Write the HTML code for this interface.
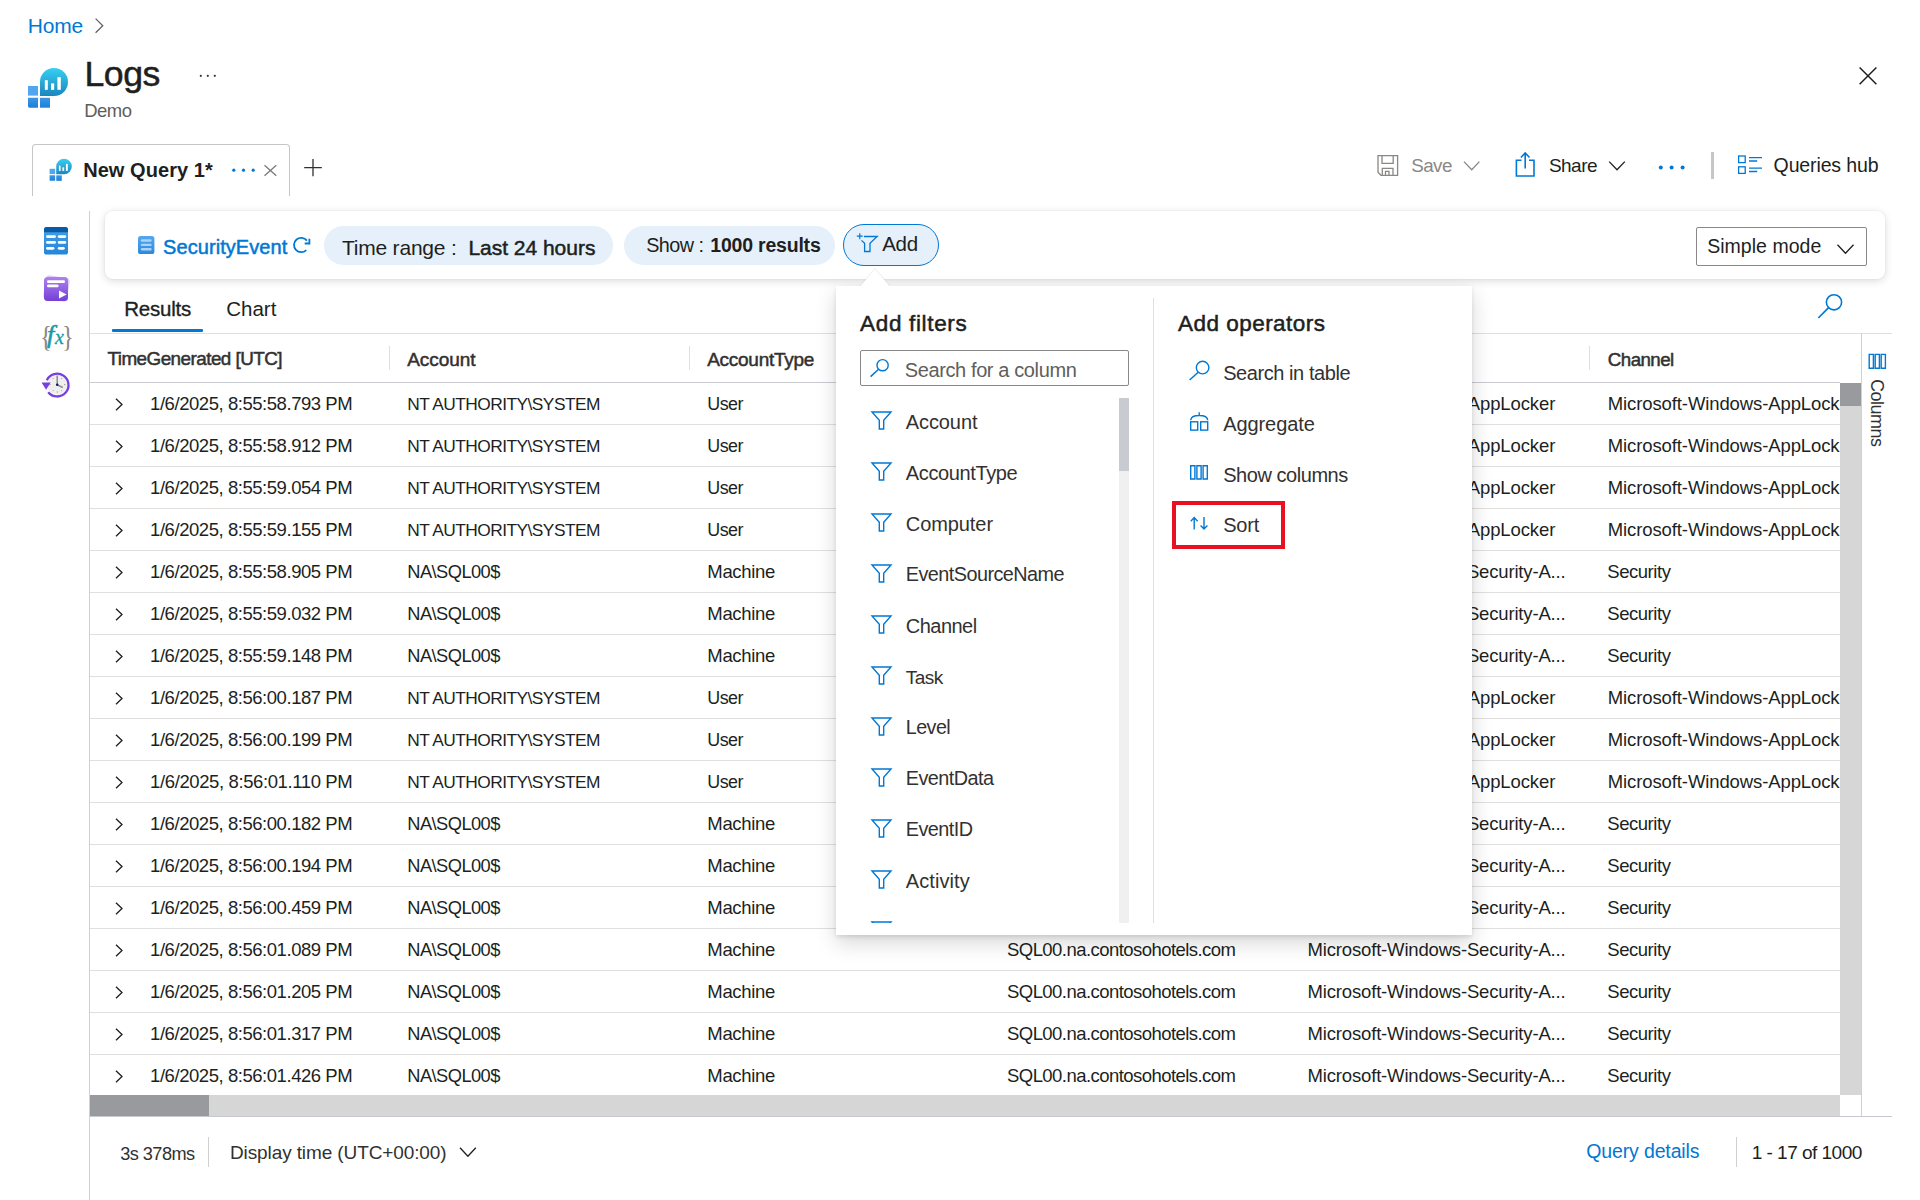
<!DOCTYPE html>
<html><head><meta charset="utf-8">
<style>
*{box-sizing:border-box;margin:0;padding:0}
html,body{width:1920px;height:1200px;overflow:hidden;background:#fff;font-family:"Liberation Sans",sans-serif;color:#201f1e}
.t{position:absolute;white-space:pre;line-height:1}
.b{position:absolute}
svg{position:absolute;overflow:visible}
</style></head><body>
<!-- lines and boxes -->
<div class="b" style="left:32px;top:144px;width:258px;height:52px;border:1px solid #c8c6c4;border-bottom:none;border-radius:4px 4px 0 0"></div>
<div class="b" style="left:1711px;top:152px;width:2.5px;height:27px;background:#c8c6c4"></div>
<div class="b" style="left:89px;top:211px;width:1px;height:989px;background:#d2d0ce"></div>
<div class="b" style="left:105px;top:211px;width:1780px;height:68px;background:#fff;border-radius:8px;box-shadow:0 2px 8px rgba(0,0,0,.14),0 0 2px rgba(0,0,0,.08)"></div>
<div class="b" style="left:324px;top:226px;width:289px;height:39px;border-radius:20px;background:#e6f0fa"></div>
<div class="b" style="left:624px;top:226px;width:211px;height:39px;border-radius:20px;background:#e6f0fa"></div>
<div class="b" style="left:843px;top:224px;width:96px;height:42px;border-radius:21px;border:1.3px solid #0078d4;background:#e6f0fa"></div>
<div class="b" style="left:1696px;top:227px;width:171px;height:39px;border:1px solid #8a8886;border-radius:2px"></div>
<div class="b" style="left:112px;top:329px;width:91px;height:3px;background:#0078d4;border-radius:1px"></div>
<div class="b" style="left:90px;top:333px;width:1802px;height:1px;background:#e1dfdd"></div>
<!-- table -->
<div class="b" style="left:90px;top:382px;width:1750px;height:1px;background:#c8ccd0"></div>
<div class="b" style="left:389px;top:346px;width:1px;height:24px;background:#e1dfdd"></div>
<div class="b" style="left:689px;top:346px;width:1px;height:24px;background:#e1dfdd"></div>
<div class="b" style="left:989px;top:346px;width:1px;height:24px;background:#e1dfdd"></div>
<div class="b" style="left:1289px;top:346px;width:1px;height:24px;background:#e1dfdd"></div>
<div class="b" style="left:1589px;top:346px;width:1px;height:24px;background:#e1dfdd"></div>
<div class="b" style="left:90px;top:424px;width:1750px;height:1px;background:#e1dfdd"></div>
<div class="b" style="left:90px;top:466px;width:1750px;height:1px;background:#e1dfdd"></div>
<div class="b" style="left:90px;top:508px;width:1750px;height:1px;background:#e1dfdd"></div>
<div class="b" style="left:90px;top:550px;width:1750px;height:1px;background:#e1dfdd"></div>
<div class="b" style="left:90px;top:592px;width:1750px;height:1px;background:#e1dfdd"></div>
<div class="b" style="left:90px;top:634px;width:1750px;height:1px;background:#e1dfdd"></div>
<div class="b" style="left:90px;top:676px;width:1750px;height:1px;background:#e1dfdd"></div>
<div class="b" style="left:90px;top:718px;width:1750px;height:1px;background:#e1dfdd"></div>
<div class="b" style="left:90px;top:760px;width:1750px;height:1px;background:#e1dfdd"></div>
<div class="b" style="left:90px;top:802px;width:1750px;height:1px;background:#e1dfdd"></div>
<div class="b" style="left:90px;top:844px;width:1750px;height:1px;background:#e1dfdd"></div>
<div class="b" style="left:90px;top:886px;width:1750px;height:1px;background:#e1dfdd"></div>
<div class="b" style="left:90px;top:928px;width:1750px;height:1px;background:#e1dfdd"></div>
<div class="b" style="left:90px;top:970px;width:1750px;height:1px;background:#e1dfdd"></div>
<div class="b" style="left:90px;top:1012px;width:1750px;height:1px;background:#e1dfdd"></div>
<div class="b" style="left:90px;top:1054px;width:1750px;height:1px;background:#e1dfdd"></div>
<div class="b" style="left:90px;top:383px;width:1750px;height:712px;overflow:hidden">
<div class="b" style="left:-90px;top:-383px;width:1920px;height:1200px">
<div class="t" style="left:150.1px;top:395.1px;font-size:18.5px;color:#201f1e;letter-spacing:-0.45px">1/6/2025, 8:55:58.793 PM</div>
<div class="t" style="left:407.3px;top:396.1px;font-size:17.35px;color:#201f1e;letter-spacing:-0.55px">NT AUTHORITY\SYSTEM</div>
<div class="t" style="left:707.3px;top:395.6px;font-size:17.91px;color:#201f1e;letter-spacing:-0.55px">User</div>
<div class="t" style="left:1007.0px;top:395.1px;font-size:18.5px;color:#201f1e;letter-spacing:-0.55px">SQL00.na.contosohotels.com</div>
<div class="t" style="left:1307.3px;top:395.1px;font-size:18.5px;color:#201f1e;letter-spacing:-0.11px">Microsoft-Windows-AppLocker</div>
<div class="t" style="left:1607.8px;top:395.1px;font-size:18.5px;color:#201f1e;letter-spacing:-0.11px">Microsoft-Windows-AppLocker</div>
<div class="t" style="left:150.1px;top:437.1px;font-size:18.5px;color:#201f1e;letter-spacing:-0.45px">1/6/2025, 8:55:58.912 PM</div>
<div class="t" style="left:407.3px;top:438.1px;font-size:17.35px;color:#201f1e;letter-spacing:-0.55px">NT AUTHORITY\SYSTEM</div>
<div class="t" style="left:707.3px;top:437.6px;font-size:17.91px;color:#201f1e;letter-spacing:-0.55px">User</div>
<div class="t" style="left:1007.0px;top:437.1px;font-size:18.5px;color:#201f1e;letter-spacing:-0.55px">SQL00.na.contosohotels.com</div>
<div class="t" style="left:1307.3px;top:437.1px;font-size:18.5px;color:#201f1e;letter-spacing:-0.11px">Microsoft-Windows-AppLocker</div>
<div class="t" style="left:1607.8px;top:437.1px;font-size:18.5px;color:#201f1e;letter-spacing:-0.11px">Microsoft-Windows-AppLocker</div>
<div class="t" style="left:150.1px;top:479.1px;font-size:18.5px;color:#201f1e;letter-spacing:-0.45px">1/6/2025, 8:55:59.054 PM</div>
<div class="t" style="left:407.3px;top:480.1px;font-size:17.35px;color:#201f1e;letter-spacing:-0.55px">NT AUTHORITY\SYSTEM</div>
<div class="t" style="left:707.3px;top:479.6px;font-size:17.91px;color:#201f1e;letter-spacing:-0.55px">User</div>
<div class="t" style="left:1007.0px;top:479.1px;font-size:18.5px;color:#201f1e;letter-spacing:-0.55px">SQL00.na.contosohotels.com</div>
<div class="t" style="left:1307.3px;top:479.1px;font-size:18.5px;color:#201f1e;letter-spacing:-0.11px">Microsoft-Windows-AppLocker</div>
<div class="t" style="left:1607.8px;top:479.1px;font-size:18.5px;color:#201f1e;letter-spacing:-0.11px">Microsoft-Windows-AppLocker</div>
<div class="t" style="left:150.1px;top:521.1px;font-size:18.5px;color:#201f1e;letter-spacing:-0.45px">1/6/2025, 8:55:59.155 PM</div>
<div class="t" style="left:407.3px;top:522.1px;font-size:17.35px;color:#201f1e;letter-spacing:-0.55px">NT AUTHORITY\SYSTEM</div>
<div class="t" style="left:707.3px;top:521.6px;font-size:17.91px;color:#201f1e;letter-spacing:-0.55px">User</div>
<div class="t" style="left:1007.0px;top:521.1px;font-size:18.5px;color:#201f1e;letter-spacing:-0.55px">SQL00.na.contosohotels.com</div>
<div class="t" style="left:1307.3px;top:521.1px;font-size:18.5px;color:#201f1e;letter-spacing:-0.11px">Microsoft-Windows-AppLocker</div>
<div class="t" style="left:1607.8px;top:521.1px;font-size:18.5px;color:#201f1e;letter-spacing:-0.11px">Microsoft-Windows-AppLocker</div>
<div class="t" style="left:150.1px;top:563.1px;font-size:18.5px;color:#201f1e;letter-spacing:-0.45px">1/6/2025, 8:55:58.905 PM</div>
<div class="t" style="left:407.3px;top:563.3px;font-size:18.28px;color:#201f1e;letter-spacing:-0.55px">NA\SQL00$</div>
<div class="t" style="left:707.3px;top:563.1px;font-size:18.5px;color:#201f1e;letter-spacing:-0.33px">Machine</div>
<div class="t" style="left:1007.0px;top:563.1px;font-size:18.5px;color:#201f1e;letter-spacing:-0.55px">SQL00.na.contosohotels.com</div>
<div class="t" style="left:1307.6px;top:563.1px;font-size:18.5px;color:#201f1e;letter-spacing:-0.17px">Microsoft-Windows-Security-A...</div>
<div class="t" style="left:1607.3px;top:563.1px;font-size:18.5px;color:#201f1e;letter-spacing:-0.46px">Security</div>
<div class="t" style="left:150.1px;top:605.1px;font-size:18.5px;color:#201f1e;letter-spacing:-0.45px">1/6/2025, 8:55:59.032 PM</div>
<div class="t" style="left:407.3px;top:605.3px;font-size:18.28px;color:#201f1e;letter-spacing:-0.55px">NA\SQL00$</div>
<div class="t" style="left:707.3px;top:605.1px;font-size:18.5px;color:#201f1e;letter-spacing:-0.33px">Machine</div>
<div class="t" style="left:1007.0px;top:605.1px;font-size:18.5px;color:#201f1e;letter-spacing:-0.55px">SQL00.na.contosohotels.com</div>
<div class="t" style="left:1307.6px;top:605.1px;font-size:18.5px;color:#201f1e;letter-spacing:-0.17px">Microsoft-Windows-Security-A...</div>
<div class="t" style="left:1607.3px;top:605.1px;font-size:18.5px;color:#201f1e;letter-spacing:-0.46px">Security</div>
<div class="t" style="left:150.1px;top:647.1px;font-size:18.5px;color:#201f1e;letter-spacing:-0.45px">1/6/2025, 8:55:59.148 PM</div>
<div class="t" style="left:407.3px;top:647.3px;font-size:18.28px;color:#201f1e;letter-spacing:-0.55px">NA\SQL00$</div>
<div class="t" style="left:707.3px;top:647.1px;font-size:18.5px;color:#201f1e;letter-spacing:-0.33px">Machine</div>
<div class="t" style="left:1007.0px;top:647.1px;font-size:18.5px;color:#201f1e;letter-spacing:-0.55px">SQL00.na.contosohotels.com</div>
<div class="t" style="left:1307.6px;top:647.1px;font-size:18.5px;color:#201f1e;letter-spacing:-0.17px">Microsoft-Windows-Security-A...</div>
<div class="t" style="left:1607.3px;top:647.1px;font-size:18.5px;color:#201f1e;letter-spacing:-0.46px">Security</div>
<div class="t" style="left:150.1px;top:689.1px;font-size:18.5px;color:#201f1e;letter-spacing:-0.45px">1/6/2025, 8:56:00.187 PM</div>
<div class="t" style="left:407.3px;top:690.1px;font-size:17.35px;color:#201f1e;letter-spacing:-0.55px">NT AUTHORITY\SYSTEM</div>
<div class="t" style="left:707.3px;top:689.6px;font-size:17.91px;color:#201f1e;letter-spacing:-0.55px">User</div>
<div class="t" style="left:1007.0px;top:689.1px;font-size:18.5px;color:#201f1e;letter-spacing:-0.55px">SQL00.na.contosohotels.com</div>
<div class="t" style="left:1307.3px;top:689.1px;font-size:18.5px;color:#201f1e;letter-spacing:-0.11px">Microsoft-Windows-AppLocker</div>
<div class="t" style="left:1607.8px;top:689.1px;font-size:18.5px;color:#201f1e;letter-spacing:-0.11px">Microsoft-Windows-AppLocker</div>
<div class="t" style="left:150.1px;top:731.1px;font-size:18.5px;color:#201f1e;letter-spacing:-0.45px">1/6/2025, 8:56:00.199 PM</div>
<div class="t" style="left:407.3px;top:732.1px;font-size:17.35px;color:#201f1e;letter-spacing:-0.55px">NT AUTHORITY\SYSTEM</div>
<div class="t" style="left:707.3px;top:731.6px;font-size:17.91px;color:#201f1e;letter-spacing:-0.55px">User</div>
<div class="t" style="left:1007.0px;top:731.1px;font-size:18.5px;color:#201f1e;letter-spacing:-0.55px">SQL00.na.contosohotels.com</div>
<div class="t" style="left:1307.3px;top:731.1px;font-size:18.5px;color:#201f1e;letter-spacing:-0.11px">Microsoft-Windows-AppLocker</div>
<div class="t" style="left:1607.8px;top:731.1px;font-size:18.5px;color:#201f1e;letter-spacing:-0.11px">Microsoft-Windows-AppLocker</div>
<div class="t" style="left:150.1px;top:773.1px;font-size:18.5px;color:#201f1e;letter-spacing:-0.39px">1/6/2025, 8:56:01.110 PM</div>
<div class="t" style="left:407.3px;top:774.1px;font-size:17.35px;color:#201f1e;letter-spacing:-0.55px">NT AUTHORITY\SYSTEM</div>
<div class="t" style="left:707.3px;top:773.6px;font-size:17.91px;color:#201f1e;letter-spacing:-0.55px">User</div>
<div class="t" style="left:1007.0px;top:773.1px;font-size:18.5px;color:#201f1e;letter-spacing:-0.55px">SQL00.na.contosohotels.com</div>
<div class="t" style="left:1307.3px;top:773.1px;font-size:18.5px;color:#201f1e;letter-spacing:-0.11px">Microsoft-Windows-AppLocker</div>
<div class="t" style="left:1607.8px;top:773.1px;font-size:18.5px;color:#201f1e;letter-spacing:-0.11px">Microsoft-Windows-AppLocker</div>
<div class="t" style="left:150.1px;top:815.1px;font-size:18.5px;color:#201f1e;letter-spacing:-0.45px">1/6/2025, 8:56:00.182 PM</div>
<div class="t" style="left:407.3px;top:815.3px;font-size:18.28px;color:#201f1e;letter-spacing:-0.55px">NA\SQL00$</div>
<div class="t" style="left:707.3px;top:815.1px;font-size:18.5px;color:#201f1e;letter-spacing:-0.33px">Machine</div>
<div class="t" style="left:1007.0px;top:815.1px;font-size:18.5px;color:#201f1e;letter-spacing:-0.55px">SQL00.na.contosohotels.com</div>
<div class="t" style="left:1307.6px;top:815.1px;font-size:18.5px;color:#201f1e;letter-spacing:-0.17px">Microsoft-Windows-Security-A...</div>
<div class="t" style="left:1607.3px;top:815.1px;font-size:18.5px;color:#201f1e;letter-spacing:-0.46px">Security</div>
<div class="t" style="left:150.1px;top:857.1px;font-size:18.5px;color:#201f1e;letter-spacing:-0.45px">1/6/2025, 8:56:00.194 PM</div>
<div class="t" style="left:407.3px;top:857.3px;font-size:18.28px;color:#201f1e;letter-spacing:-0.55px">NA\SQL00$</div>
<div class="t" style="left:707.3px;top:857.1px;font-size:18.5px;color:#201f1e;letter-spacing:-0.33px">Machine</div>
<div class="t" style="left:1007.0px;top:857.1px;font-size:18.5px;color:#201f1e;letter-spacing:-0.55px">SQL00.na.contosohotels.com</div>
<div class="t" style="left:1307.6px;top:857.1px;font-size:18.5px;color:#201f1e;letter-spacing:-0.17px">Microsoft-Windows-Security-A...</div>
<div class="t" style="left:1607.3px;top:857.1px;font-size:18.5px;color:#201f1e;letter-spacing:-0.46px">Security</div>
<div class="t" style="left:150.1px;top:899.1px;font-size:18.5px;color:#201f1e;letter-spacing:-0.45px">1/6/2025, 8:56:00.459 PM</div>
<div class="t" style="left:407.3px;top:899.3px;font-size:18.28px;color:#201f1e;letter-spacing:-0.55px">NA\SQL00$</div>
<div class="t" style="left:707.3px;top:899.1px;font-size:18.5px;color:#201f1e;letter-spacing:-0.33px">Machine</div>
<div class="t" style="left:1007.0px;top:899.1px;font-size:18.5px;color:#201f1e;letter-spacing:-0.55px">SQL00.na.contosohotels.com</div>
<div class="t" style="left:1307.6px;top:899.1px;font-size:18.5px;color:#201f1e;letter-spacing:-0.17px">Microsoft-Windows-Security-A...</div>
<div class="t" style="left:1607.3px;top:899.1px;font-size:18.5px;color:#201f1e;letter-spacing:-0.46px">Security</div>
<div class="t" style="left:150.1px;top:941.1px;font-size:18.5px;color:#201f1e;letter-spacing:-0.45px">1/6/2025, 8:56:01.089 PM</div>
<div class="t" style="left:407.3px;top:941.3px;font-size:18.28px;color:#201f1e;letter-spacing:-0.55px">NA\SQL00$</div>
<div class="t" style="left:707.3px;top:941.1px;font-size:18.5px;color:#201f1e;letter-spacing:-0.33px">Machine</div>
<div class="t" style="left:1007.0px;top:941.1px;font-size:18.5px;color:#201f1e;letter-spacing:-0.55px">SQL00.na.contosohotels.com</div>
<div class="t" style="left:1307.6px;top:941.1px;font-size:18.5px;color:#201f1e;letter-spacing:-0.17px">Microsoft-Windows-Security-A...</div>
<div class="t" style="left:1607.3px;top:941.1px;font-size:18.5px;color:#201f1e;letter-spacing:-0.46px">Security</div>
<div class="t" style="left:150.1px;top:983.1px;font-size:18.5px;color:#201f1e;letter-spacing:-0.45px">1/6/2025, 8:56:01.205 PM</div>
<div class="t" style="left:407.3px;top:983.3px;font-size:18.28px;color:#201f1e;letter-spacing:-0.55px">NA\SQL00$</div>
<div class="t" style="left:707.3px;top:983.1px;font-size:18.5px;color:#201f1e;letter-spacing:-0.33px">Machine</div>
<div class="t" style="left:1007.0px;top:983.1px;font-size:18.5px;color:#201f1e;letter-spacing:-0.55px">SQL00.na.contosohotels.com</div>
<div class="t" style="left:1307.6px;top:983.1px;font-size:18.5px;color:#201f1e;letter-spacing:-0.17px">Microsoft-Windows-Security-A...</div>
<div class="t" style="left:1607.3px;top:983.1px;font-size:18.5px;color:#201f1e;letter-spacing:-0.46px">Security</div>
<div class="t" style="left:150.1px;top:1025.1px;font-size:18.5px;color:#201f1e;letter-spacing:-0.45px">1/6/2025, 8:56:01.317 PM</div>
<div class="t" style="left:407.3px;top:1025.3px;font-size:18.28px;color:#201f1e;letter-spacing:-0.55px">NA\SQL00$</div>
<div class="t" style="left:707.3px;top:1025.1px;font-size:18.5px;color:#201f1e;letter-spacing:-0.33px">Machine</div>
<div class="t" style="left:1007.0px;top:1025.1px;font-size:18.5px;color:#201f1e;letter-spacing:-0.55px">SQL00.na.contosohotels.com</div>
<div class="t" style="left:1307.6px;top:1025.1px;font-size:18.5px;color:#201f1e;letter-spacing:-0.17px">Microsoft-Windows-Security-A...</div>
<div class="t" style="left:1607.3px;top:1025.1px;font-size:18.5px;color:#201f1e;letter-spacing:-0.46px">Security</div>
<div class="t" style="left:150.1px;top:1067.1px;font-size:18.5px;color:#201f1e;letter-spacing:-0.45px">1/6/2025, 8:56:01.426 PM</div>
<div class="t" style="left:407.3px;top:1067.3px;font-size:18.28px;color:#201f1e;letter-spacing:-0.55px">NA\SQL00$</div>
<div class="t" style="left:707.3px;top:1067.1px;font-size:18.5px;color:#201f1e;letter-spacing:-0.33px">Machine</div>
<div class="t" style="left:1007.0px;top:1067.1px;font-size:18.5px;color:#201f1e;letter-spacing:-0.55px">SQL00.na.contosohotels.com</div>
<div class="t" style="left:1307.6px;top:1067.1px;font-size:18.5px;color:#201f1e;letter-spacing:-0.17px">Microsoft-Windows-Security-A...</div>
<div class="t" style="left:1607.3px;top:1067.1px;font-size:18.5px;color:#201f1e;letter-spacing:-0.46px">Security</div><svg style="left:115px;top:397.5px" width="8" height="13" viewBox="0 0 8 13"><path d="M1 0.7L7 6.5L1 12.3" fill="none" stroke="#201f1e" stroke-width="1.3"/></svg><svg style="left:115px;top:439.5px" width="8" height="13" viewBox="0 0 8 13"><path d="M1 0.7L7 6.5L1 12.3" fill="none" stroke="#201f1e" stroke-width="1.3"/></svg><svg style="left:115px;top:481.5px" width="8" height="13" viewBox="0 0 8 13"><path d="M1 0.7L7 6.5L1 12.3" fill="none" stroke="#201f1e" stroke-width="1.3"/></svg><svg style="left:115px;top:523.5px" width="8" height="13" viewBox="0 0 8 13"><path d="M1 0.7L7 6.5L1 12.3" fill="none" stroke="#201f1e" stroke-width="1.3"/></svg><svg style="left:115px;top:565.5px" width="8" height="13" viewBox="0 0 8 13"><path d="M1 0.7L7 6.5L1 12.3" fill="none" stroke="#201f1e" stroke-width="1.3"/></svg><svg style="left:115px;top:607.5px" width="8" height="13" viewBox="0 0 8 13"><path d="M1 0.7L7 6.5L1 12.3" fill="none" stroke="#201f1e" stroke-width="1.3"/></svg><svg style="left:115px;top:649.5px" width="8" height="13" viewBox="0 0 8 13"><path d="M1 0.7L7 6.5L1 12.3" fill="none" stroke="#201f1e" stroke-width="1.3"/></svg><svg style="left:115px;top:691.5px" width="8" height="13" viewBox="0 0 8 13"><path d="M1 0.7L7 6.5L1 12.3" fill="none" stroke="#201f1e" stroke-width="1.3"/></svg><svg style="left:115px;top:733.5px" width="8" height="13" viewBox="0 0 8 13"><path d="M1 0.7L7 6.5L1 12.3" fill="none" stroke="#201f1e" stroke-width="1.3"/></svg><svg style="left:115px;top:775.5px" width="8" height="13" viewBox="0 0 8 13"><path d="M1 0.7L7 6.5L1 12.3" fill="none" stroke="#201f1e" stroke-width="1.3"/></svg><svg style="left:115px;top:817.5px" width="8" height="13" viewBox="0 0 8 13"><path d="M1 0.7L7 6.5L1 12.3" fill="none" stroke="#201f1e" stroke-width="1.3"/></svg><svg style="left:115px;top:859.5px" width="8" height="13" viewBox="0 0 8 13"><path d="M1 0.7L7 6.5L1 12.3" fill="none" stroke="#201f1e" stroke-width="1.3"/></svg><svg style="left:115px;top:901.5px" width="8" height="13" viewBox="0 0 8 13"><path d="M1 0.7L7 6.5L1 12.3" fill="none" stroke="#201f1e" stroke-width="1.3"/></svg><svg style="left:115px;top:943.5px" width="8" height="13" viewBox="0 0 8 13"><path d="M1 0.7L7 6.5L1 12.3" fill="none" stroke="#201f1e" stroke-width="1.3"/></svg><svg style="left:115px;top:985.5px" width="8" height="13" viewBox="0 0 8 13"><path d="M1 0.7L7 6.5L1 12.3" fill="none" stroke="#201f1e" stroke-width="1.3"/></svg><svg style="left:115px;top:1027.5px" width="8" height="13" viewBox="0 0 8 13"><path d="M1 0.7L7 6.5L1 12.3" fill="none" stroke="#201f1e" stroke-width="1.3"/></svg><svg style="left:115px;top:1069.5px" width="8" height="13" viewBox="0 0 8 13"><path d="M1 0.7L7 6.5L1 12.3" fill="none" stroke="#201f1e" stroke-width="1.3"/></svg>
</div></div>
<div class="t" style="left:27.7px;top:15.4px;font-size:21px;color:#0078d4;letter-spacing:-0.19px">Home</div>
<div class="t" style="left:84.6px;top:57.2px;font-size:35.67px;color:#201f1e;letter-spacing:-0.55px;-webkit-text-stroke:0.5px currentColor">Logs</div>
<div class="t" style="left:84.3px;top:102.1px;font-size:18.48px;color:#605e5c;letter-spacing:-0.55px">Demo</div>
<div class="t" style="left:83.2px;top:160.0px;font-size:20px;color:#201f1e;font-weight:bold;letter-spacing:0.06px">New Query 1*</div>
<div class="t" style="left:1411.2px;top:157.0px;font-size:18.79px;color:#8a8886;letter-spacing:-0.55px">Save</div>
<div class="t" style="left:1548.9px;top:156.3px;font-size:19px;color:#201f1e;letter-spacing:-0.51px">Share</div>
<div class="t" style="left:1773.6px;top:156.4px;font-size:19.5px;color:#201f1e;letter-spacing:-0.13px">Queries hub</div>
<div class="t" style="left:163.1px;top:237.3px;font-size:20px;color:#0078d4;letter-spacing:0.06px;-webkit-text-stroke:0.5px currentColor">SecurityEvent</div>
<div class="t" style="left:341.9px;top:237.0px;font-size:21px;color:#201f1e;letter-spacing:-0.20px">Time range :</div>
<div class="t" style="left:468.4px;top:237.0px;font-size:21px;color:#201f1e;letter-spacing:-0.02px;-webkit-text-stroke:0.5px currentColor">Last 24 hours</div>
<div class="t" style="left:646.2px;top:236.0px;font-size:19.79px;color:#201f1e;letter-spacing:-0.55px">Show :</div>
<div class="t" style="left:710.3px;top:236.2px;font-size:19.5px;color:#201f1e;font-weight:bold;letter-spacing:-0.21px">1000 results</div>
<div class="t" style="left:882.2px;top:234.2px;font-size:20.5px;color:#201f1e;letter-spacing:-0.28px">Add</div>
<div class="t" style="left:1707.2px;top:237.2px;font-size:19.5px;color:#201f1e;letter-spacing:0.03px">Simple mode</div>
<div class="t" style="left:124.2px;top:299.4px;font-size:20.5px;color:#201f1e;letter-spacing:-0.22px;-webkit-text-stroke:0.35px currentColor">Results</div>
<div class="t" style="left:226.2px;top:299.4px;font-size:20.5px;color:#201f1e;letter-spacing:0.02px">Chart</div>
<div class="t" style="left:107.5px;top:350.3px;font-size:18.89px;color:#323130;letter-spacing:-0.55px;-webkit-text-stroke:0.5px currentColor">TimeGenerated [UTC]</div>
<div class="t" style="left:407.2px;top:350.2px;font-size:19px;color:#323130;letter-spacing:-0.07px;-webkit-text-stroke:0.5px currentColor">Account</div>
<div class="t" style="left:707.2px;top:350.2px;font-size:19px;color:#323130;letter-spacing:-0.27px;-webkit-text-stroke:0.5px currentColor">AccountType</div>
<div class="t" style="left:1007.2px;top:350.2px;font-size:19px;color:#323130;-webkit-text-stroke:0.5px currentColor">Computer</div>
<div class="t" style="left:1307.2px;top:350.2px;font-size:19px;color:#323130;-webkit-text-stroke:0.5px currentColor">EventSourceName</div>
<div class="t" style="left:1607.8px;top:350.5px;font-size:18.73px;color:#323130;letter-spacing:-0.55px;-webkit-text-stroke:0.5px currentColor">Channel</div>
<div class="t" style="left:120.2px;top:1144.5px;font-size:18.18px;color:#323130;letter-spacing:-0.55px">3s 378ms</div>
<div class="t" style="left:230.0px;top:1143.1px;font-size:19px;color:#323130;letter-spacing:-0.11px">Display time (UTC+00:00)</div>
<div class="t" style="left:1586.2px;top:1142.4px;font-size:19.5px;color:#0078d4;letter-spacing:-0.13px">Query details</div>
<div class="t" style="left:1751.7px;top:1143.4px;font-size:19.1px;color:#201f1e;letter-spacing:-0.55px">1 - 17 of 1000</div>
<!-- scrollbars -->
<div class="b" style="left:90px;top:1095px;width:1750px;height:21px;background:#d6d6d6"></div>
<div class="b" style="left:90px;top:1095px;width:119px;height:21px;background:#999a9e"></div>
<div class="b" style="left:1840px;top:383px;width:21px;height:712px;background:#d6d6d6"></div>
<div class="b" style="left:1840px;top:383px;width:21px;height:23px;background:#999a9e"></div>
<div class="b" style="left:1861px;top:333px;width:1px;height:783px;background:#d2d0ce"></div>
<div class="b" style="left:90px;top:1116px;width:1802px;height:1px;background:#c6cad0"></div>
<div class="b" style="left:208px;top:1137px;width:1px;height:30px;background:#d2d0ce"></div>
<div class="b" style="left:1736px;top:1137px;width:1px;height:30px;background:#d2d0ce"></div>
<div class="t" style="left:1869.5px;top:379px;font-size:18px;color:#323130;transform-origin:0 0;transform:translate(16px,0) rotate(90deg);letter-spacing:-0.5px">Columns</div>
<!-- logo -->
<svg style="left:0;top:0" width="1" height="1">
 <defs>
  <linearGradient id="lg1" x1="0" y1="0" x2="0" y2="1"><stop offset="0" stop-color="#36d0f2"/><stop offset="1" stop-color="#1b86bd"/></linearGradient>
  <linearGradient id="lg2" x1="0" y1="0" x2="0" y2="1"><stop offset="0" stop-color="#3a97e6"/><stop offset="1" stop-color="#1f7fd6"/></linearGradient>
  <linearGradient id="tb" x1="0" y1="0" x2="0" y2="1"><stop offset="0" stop-color="#42a2ee"/><stop offset="1" stop-color="#2585d8"/></linearGradient>
  <linearGradient id="pu" x1="0" y1="0" x2="0" y2="1"><stop offset="0" stop-color="#ad82ee"/><stop offset="1" stop-color="#7440d6"/></linearGradient>
  <linearGradient id="db" x1="0" y1="0" x2="0" y2="1"><stop offset="0" stop-color="#55a8f0"/><stop offset="1" stop-color="#2d88dd"/></linearGradient>
  <g id="logo">
   <rect x="28" y="86" width="10" height="9.6" fill="#52a6f0"/>
   <path d="M28 97.8H38V107.7H29.6A1.6 1.6 0 0 1 28 106.1Z" fill="url(#lg2)"/>
   <rect x="40" y="97.8" width="10" height="9.9" fill="url(#lg2)"/>
   <path d="M40 82A14 14 0 1 1 54 96H40Z" fill="url(#lg1)"/>
   <rect x="44.8" y="80.2" width="3" height="9.6" fill="#fff"/>
   <rect x="51" y="83.4" width="3.2" height="6.4" fill="#fff"/>
   <rect x="57.4" y="77.2" width="3.4" height="12.6" fill="#fff"/>
  </g>
 </defs>
</svg>
<svg style="left:0;top:0" width="100" height="120" viewBox="0 0 100 120"><use href="#logo"/></svg>
<svg style="left:0;top:0" width="100" height="200" viewBox="0 0 100 200"><g transform="translate(49.6 158.8) scale(0.555) translate(-28 -68)"><use href="#logo"/></g></svg>
<!-- breadcrumb chevron -->
<svg style="left:0;top:0" width="1920" height="1200" viewBox="0 0 1920 1200">
 <path d="M95.6 18.6L102.8 25.7L95.6 32.8" fill="none" stroke="#605e5c" stroke-width="1.2"/>
 <circle cx="200.8" cy="75.8" r="1.1" fill="#323130"/><circle cx="207.8" cy="75.8" r="1.1" fill="#323130"/><circle cx="214.8" cy="75.8" r="1.1" fill="#323130"/>
 <path d="M1859.6 67.5L1876.4 84.3M1876.4 67.5L1859.6 84.3" stroke="#201f1e" stroke-width="1.5"/>
 <!-- tab -->
 <circle cx="233.8" cy="170.2" r="1.6" fill="#0078d4"/><circle cx="243.5" cy="170.2" r="1.6" fill="#0078d4"/><circle cx="253.2" cy="170.2" r="1.6" fill="#0078d4"/>
 <path d="M264.5 165.2L276.3 175.8M276.3 165.2L264.5 175.8" stroke="#797775" stroke-width="1.2"/>
 <path d="M313 159V176.3M304.2 167.7H321.8" stroke="#323130" stroke-width="1.3"/>
 <!-- save -->
 <path d="M1378 155.7H1397.6V175.3H1381L1378 172.3Z" fill="none" stroke="#8a8886" stroke-width="1.3"/>
 <path d="M1382 155.7V163.4H1393.2V155.7" fill="none" stroke="#8a8886" stroke-width="1.3"/>
 <path d="M1382.3 175.3V168.3H1393V175.3M1385.5 175.3V171.4H1389V175.3" fill="none" stroke="#8a8886" stroke-width="1.3"/>
 <path d="M1464 161.6L1471.7 169.8L1479.4 161.6" fill="none" stroke="#8a8886" stroke-width="1.3"/>
 <!-- share -->
 <path d="M1521.5 160.3H1516.4V176H1534V160.3H1529" fill="none" stroke="#0078d4" stroke-width="1.6"/>
 <path d="M1525.2 168.5V153.5M1520.9 157.5L1525.2 153L1529.5 157.5" fill="none" stroke="#0078d4" stroke-width="1.6"/>
 <path d="M1609.2 161.6L1617 169.8L1624.8 161.6" fill="none" stroke="#201f1e" stroke-width="1.3"/>
 <circle cx="1660.8" cy="167.5" r="2" fill="#0078d4"/><circle cx="1671.6" cy="167.5" r="2" fill="#0078d4"/><circle cx="1682.6" cy="167.5" r="2" fill="#0078d4"/>
 <!-- queries hub -->
 <rect x="1738.6" y="156" width="6.6" height="6.6" fill="none" stroke="#0078d4" stroke-width="1.3"/>
 <rect x="1738.6" y="166.8" width="6.6" height="6.6" fill="none" stroke="#0078d4" stroke-width="1.3"/>
 <path d="M1749 157.6H1762M1749 161H1757.2M1749 168.2H1762M1749 171.5H1757.2" stroke="#0078d4" stroke-width="1.3"/>
 <!-- sidebar table icon -->
 <rect x="44" y="227" width="24" height="27.6" rx="2.6" fill="url(#tb)"/>
 <path d="M44 232.2V229.6A2.6 2.6 0 0 1 46.6 227H65.4A2.6 2.6 0 0 1 68 229.6V232.2Z" fill="#0b5aa6"/>
 <rect x="46" y="235.2" width="10" height="2.8" rx="1.4" fill="#fff"/><rect x="57.8" y="235.2" width="8.4" height="2.8" rx="1.4" fill="#fff"/>
 <rect x="46" y="241" width="10" height="2.8" rx="1.4" fill="#fff"/><rect x="57.8" y="241" width="8.4" height="2.8" rx="1.4" fill="#fff"/>
 <rect x="46" y="246.9" width="8.4" height="2.8" rx="1.4" fill="#fff"/><rect x="57.8" y="246.9" width="7" height="2.8" rx="1.4" fill="#fff"/>
 <!-- purple -->
 <rect x="44.5" y="276.5" width="24" height="24" rx="4" fill="#c7a6f3" opacity="0.55" transform="rotate(9 56.5 288.5)"/>
 <rect x="44" y="277" width="24" height="24" rx="3.5" fill="url(#pu)"/>
 <rect x="47" y="280.3" width="18" height="2.7" rx="1.35" fill="#fff"/>
 <rect x="47" y="284.6" width="11.6" height="2.7" rx="1.35" fill="#fff"/>
 <path d="M59 290.6L66.6 294.6L59 298.4Z" fill="#fff"/>
 <!-- fx -->
 <text x="40" y="346" font-family="Liberation Serif" font-size="29" fill="#8a8886" transform="translate(40 346) scale(0.85 1) translate(-40 -346)">{</text>
 <text x="62" y="346" font-family="Liberation Serif" font-size="29" fill="#8a8886" transform="translate(62 346) scale(0.85 1) translate(-62 -346)">}</text>
 <text x="47" y="343" font-family="Liberation Serif" font-style="italic" font-size="26" fill="#1a9aa8" stroke="#1a9aa8" stroke-width="0.6">f</text>
 <text x="55" y="343.5" font-family="Liberation Serif" font-style="italic" font-size="20" fill="#1a9aa8" stroke="#1a9aa8" stroke-width="0.3">x</text>
 <!-- history -->
 <circle cx="57.3" cy="384.6" r="10.4" fill="#efefef"/><path d="M57.3 376.6V377.8M57.3 391.4V392.6M49.3 384.6H50.5M64.1 384.6H65.3M52.8 378.1L53.3 378.9M61.8 378.1L61.3 378.9M52.8 391.1L53.3 390.3M61.8 391.1L61.3 390.3" stroke="#8a8886" stroke-width="0.9"/>
 <path d="M48.2 392.2A11.4 11.4 0 1 0 46.8 380.2" fill="none" stroke="#773fdf" stroke-width="2.3"/>
 <path d="M41.6 382.6L50.6 382.6L46.1 389.8Z" fill="#773fdf"/>
 <path d="M57.2 384.8V375.6M57.2 384.8L62.8 387.5" stroke="#8a8886" stroke-width="1.4"/>
 <circle cx="57.2" cy="384.8" r="1.3" fill="#1b1a5e"/>
 <!-- db icon -->
 <rect x="138" y="236" width="16.4" height="18" rx="2.6" fill="url(#db)"/>
 <rect x="140.8" y="239.3" width="10.8" height="2.4" rx="1.2" fill="#a9d3f7"/>
 <rect x="140.8" y="243.7" width="10.8" height="2.4" rx="1.2" fill="#a9d3f7"/>
 <rect x="140.8" y="248.1" width="10.8" height="2.4" rx="1.2" fill="#a9d3f7"/>
 <!-- refresh -->
 <path d="M306.3 250.1A7.2 7.2 0 1 1 306.9 240.6" fill="none" stroke="#0078d4" stroke-width="1.8"/>
 <path d="M309.4 238.8V243.5H304.7" fill="none" stroke="#0078d4" stroke-width="1.8"/>
 <!-- add funnel -->
 <path d="M859.8 233.2V239.2M856.8 236.2H862.8" stroke="#0078d4" stroke-width="1.2"/>
 <path d="M864 236.5H877.2L870 243.4V251.5H864.6V243.4L861.5 240.4" fill="none" stroke="#0078d4" stroke-width="1.3"/>
 <!-- simple mode chevron -->
 <path d="M1837.5 244.8L1845.5 253.2L1853.5 244.8" fill="none" stroke="#201f1e" stroke-width="1.3"/>
 <!-- magnifier -->
 <circle cx="1834" cy="302.3" r="7.6" fill="none" stroke="#0078d4" stroke-width="1.6"/>
 <path d="M1828.6 307.7L1818.3 318" stroke="#0078d4" stroke-width="1.7"/>
 <!-- columns icon -->
 <path d="M1869.2 354.4H1873.4V368.2H1869.2ZM1875.2 354.4H1879.4V368.2H1875.2ZM1881.2 354.4H1885.4V368.2H1881.2Z" fill="none" stroke="#0078d4" stroke-width="1.4"/>
 <!-- display chevron -->
 <path d="M460 1147.8L467.9 1156.3L475.8 1147.8" fill="none" stroke="#201f1e" stroke-width="1.3"/>
</svg>

<!-- popup -->
<div class="b" style="left:836px;top:286px;width:636px;height:649px;background:#fff;box-shadow:0 8px 20px rgba(0,0,0,.16),0 1.5px 4px rgba(0,0,0,.10)"></div>
<svg style="left:860px;top:268px" width="30" height="19" viewBox="0 0 30 19"><path d="M0 18.5L15 1L30 18.5Z" fill="#fff"/><path d="M0 18L15 0.5L30 18" fill="none" stroke="rgba(0,0,0,.07)" stroke-width="1"/></svg>
<div class="b" style="left:860px;top:350px;width:269px;height:36px;border:1px solid #8a8886;border-radius:2px"></div>
<div class="b" style="left:1119px;top:398px;width:10px;height:525px;background:#f0f0f0"></div>
<div class="b" style="left:1119px;top:398px;width:10px;height:73px;background:#c8ccd0"></div>
<div class="b" style="left:1153px;top:298px;width:1px;height:625px;background:#e1dfdd"></div>
<div class="b" style="left:1172px;top:501px;width:113px;height:48px;border:4.5px solid #e81123"></div>
<div class="t" style="left:860.1px;top:312.7px;font-size:22.5px;color:#201f1e;letter-spacing:0.66px;-webkit-text-stroke:0.5px currentColor">Add filters</div>
<div class="t" style="left:1178.1px;top:313.2px;font-size:22.5px;color:#201f1e;letter-spacing:0.46px;-webkit-text-stroke:0.5px currentColor">Add operators</div>
<div class="t" style="left:904.7px;top:360.0px;font-size:20px;color:#605e5c;letter-spacing:-0.38px">Search for a column</div>
<div class="t" style="left:1223.2px;top:363.2px;font-size:20px;color:#323130;letter-spacing:-0.43px">Search in table</div>
<div class="t" style="left:1223.2px;top:414.2px;font-size:20px;color:#323130;letter-spacing:-0.08px">Aggregate</div>
<div class="t" style="left:1223.2px;top:465.0px;font-size:20px;color:#323130;letter-spacing:-0.45px">Show columns</div>
<div class="t" style="left:1223.2px;top:515.0px;font-size:20px;color:#323130;letter-spacing:-0.22px">Sort</div>
<div class="b" style="left:836px;top:398px;width:283px;height:525px;overflow:hidden"><div class="b" style="left:-836px;top:-398px;width:1920px;height:1200px">
<div class="t" style="left:905.8px;top:412.0px;font-size:20px;color:#323130;letter-spacing:-0.10px">Account</div>
<div class="t" style="left:905.8px;top:463.0px;font-size:20px;color:#323130;letter-spacing:-0.37px">AccountType</div>
<div class="t" style="left:905.8px;top:514.0px;font-size:20px;color:#323130;letter-spacing:-0.08px">Computer</div>
<div class="t" style="left:905.8px;top:565.1px;font-size:19.83px;color:#323130;letter-spacing:-0.55px">EventSourceName</div>
<div class="t" style="left:905.8px;top:616.0px;font-size:20px;color:#323130;letter-spacing:-0.53px">Channel</div>
<div class="t" style="left:905.8px;top:667.8px;font-size:19.02px;color:#323130;letter-spacing:-0.55px">Task</div>
<div class="t" style="left:905.8px;top:718.2px;font-size:19.72px;color:#323130;letter-spacing:-0.55px">Level</div>
<div class="t" style="left:905.8px;top:769.1px;font-size:19.84px;color:#323130;letter-spacing:-0.55px">EventData</div>
<div class="t" style="left:905.8px;top:820.1px;font-size:19.83px;color:#323130;letter-spacing:-0.55px">EventID</div>
<div class="t" style="left:905.8px;top:871.0px;font-size:20px;color:#323130;letter-spacing:0.08px">Activity</div><svg style="left:871px;top:411px" width="21" height="19" viewBox="0 0 21 19"><path d="M1 1H20L12.7 9.3V18H8.3V9.3Z" fill="none" stroke="#0078d4" stroke-width="1.4" stroke-linejoin="miter"/></svg>
<svg style="left:871px;top:462px" width="21" height="19" viewBox="0 0 21 19"><path d="M1 1H20L12.7 9.3V18H8.3V9.3Z" fill="none" stroke="#0078d4" stroke-width="1.4" stroke-linejoin="miter"/></svg>
<svg style="left:871px;top:513px" width="21" height="19" viewBox="0 0 21 19"><path d="M1 1H20L12.7 9.3V18H8.3V9.3Z" fill="none" stroke="#0078d4" stroke-width="1.4" stroke-linejoin="miter"/></svg>
<svg style="left:871px;top:564px" width="21" height="19" viewBox="0 0 21 19"><path d="M1 1H20L12.7 9.3V18H8.3V9.3Z" fill="none" stroke="#0078d4" stroke-width="1.4" stroke-linejoin="miter"/></svg>
<svg style="left:871px;top:615px" width="21" height="19" viewBox="0 0 21 19"><path d="M1 1H20L12.7 9.3V18H8.3V9.3Z" fill="none" stroke="#0078d4" stroke-width="1.4" stroke-linejoin="miter"/></svg>
<svg style="left:871px;top:666px" width="21" height="19" viewBox="0 0 21 19"><path d="M1 1H20L12.7 9.3V18H8.3V9.3Z" fill="none" stroke="#0078d4" stroke-width="1.4" stroke-linejoin="miter"/></svg>
<svg style="left:871px;top:717px" width="21" height="19" viewBox="0 0 21 19"><path d="M1 1H20L12.7 9.3V18H8.3V9.3Z" fill="none" stroke="#0078d4" stroke-width="1.4" stroke-linejoin="miter"/></svg>
<svg style="left:871px;top:768px" width="21" height="19" viewBox="0 0 21 19"><path d="M1 1H20L12.7 9.3V18H8.3V9.3Z" fill="none" stroke="#0078d4" stroke-width="1.4" stroke-linejoin="miter"/></svg>
<svg style="left:871px;top:819px" width="21" height="19" viewBox="0 0 21 19"><path d="M1 1H20L12.7 9.3V18H8.3V9.3Z" fill="none" stroke="#0078d4" stroke-width="1.4" stroke-linejoin="miter"/></svg>
<svg style="left:871px;top:870px" width="21" height="19" viewBox="0 0 21 19"><path d="M1 1H20L12.7 9.3V18H8.3V9.3Z" fill="none" stroke="#0078d4" stroke-width="1.4" stroke-linejoin="miter"/></svg>
<svg style="left:871px;top:921px" width="21" height="19" viewBox="0 0 21 19"><path d="M1 1H20L12.7 9.3V18H8.3V9.3Z" fill="none" stroke="#0078d4" stroke-width="1.4" stroke-linejoin="miter"/></svg>
</div></div>
<svg style="left:0;top:0" width="1920" height="1200" viewBox="0 0 1920 1200">
 <circle cx="882.6" cy="365.2" r="5.6" fill="none" stroke="#0078d4" stroke-width="1.4"/>
 <path d="M878.6 369.2L870.6 376.6" stroke="#0078d4" stroke-width="1.5"/>
 <circle cx="1202.6" cy="367.6" r="6.3" fill="none" stroke="#0078d4" stroke-width="1.4"/>
 <path d="M1198.2 372.2L1189.6 380" stroke="#0078d4" stroke-width="1.5"/>
 <rect x="1190.7" y="421.8" width="7" height="8.3" fill="none" stroke="#0078d4" stroke-width="1.4"/>
 <rect x="1200.7" y="421.8" width="7" height="8.3" fill="none" stroke="#0078d4" stroke-width="1.4"/>
 <path d="M1190.7 420.2Q1191 415.5 1199.2 415.5Q1207.4 415.5 1207.7 420.2M1199.2 415.5V412.2" fill="none" stroke="#0078d4" stroke-width="1.4"/>
 <path d="M1190.7 465.8H1194.9V479H1190.7ZM1196.9 465.8H1201.1V479H1196.9ZM1203.1 465.8H1207.3V479H1203.1Z" fill="none" stroke="#0078d4" stroke-width="1.4"/>
 <path d="M1194.2 529.5V517.8M1190.8 521.2L1194.2 517.6L1197.6 521.2M1204 517V528.8M1200.6 525.4L1204 529L1207.4 525.4" fill="none" stroke="#0078d4" stroke-width="1.4"/>
</svg>

</body></html>
